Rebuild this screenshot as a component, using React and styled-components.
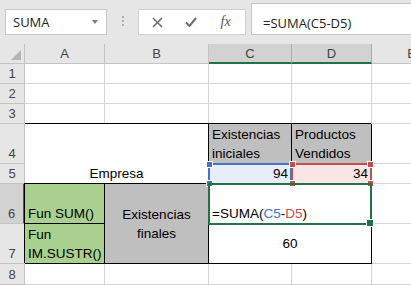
import React from "react"
import styled, { createGlobalStyle } from "styled-components"

const GlobalStyle = createGlobalStyle`
  html, body {
    margin: 0;
    padding: 0;
    background: #fff;
  }
`

const Window = styled.div`
  width: 411px;
  height: 285px;
  overflow: hidden;
  background: #e6e6e6;
  display: flex;
  flex-direction: column;
`

const FormulaBar = styled.div`
  height: 44px;
  flex: none;
  display: flex;
  align-items: flex-start;
  padding-left: 5px;
  font-family: "Open Sans", sans-serif;
  font-size: 13px;
  color: #222;
`

const NameBox = styled.div`
  margin-top: 9px;
  width: 102px;
  height: 26px;
  box-sizing: border-box;
  background: #fff;
  border: 1px solid #c6c6c6;
  display: flex;
  align-items: center;
  justify-content: space-between;
  padding: 0 8px 0 7px;
`

const Caret = styled.span`
  width: 0;
  height: 0;
  border-left: 3.5px solid transparent;
  border-right: 3.5px solid transparent;
  border-top: 4px solid #7a7a7a;
`

const Grip = styled.div`
  width: 31px;
  margin-top: 16px;
  display: flex;
  flex-direction: column;
  align-items: center;
  gap: 2px;

  span {
    width: 2px;
    height: 2px;
    background: #b0b0b0;
  }
`

const ButtonsBox = styled.div`
  margin-top: 9px;
  width: 108px;
  height: 26px;
  box-sizing: border-box;
  background: #fff;
  border: 1px solid #d0d0d0;
  display: flex;
  align-items: center;
  padding-left: 1px;
`

const IconButton = styled.div`
  width: ${p => p.$w}px;
  display: flex;
  justify-content: center;
  align-items: center;
  color: #6d6d6d;
`

const Fx = styled.span`
  font-family: "Liberation Serif", serif;
  font-style: italic;
  font-size: 14px;
  color: #555;
`

const FormulaInput = styled.div`
  margin: 3px 0 0 5px;
  flex: 1;
  height: 32px;
  box-sizing: border-box;
  background: #fff;
  border: 1px solid #c6c6c6;
  border-right: none;
  padding: 10px 0 0 11px;
  line-height: 18px;
`

const Sheet = styled.div`
  position: relative;
  display: grid;
  grid-template-columns: 25px 80px 104px 83px 80px 80px;
  grid-template-rows: 20px 20px 20px 20px 40px 20px 40px 40px 21px;
  background: #fff;
  font-family: "Liberation Sans", Arial, sans-serif;
  font-size: 13.5px;
  color: #000;
`

const Corner = styled.div`
  grid-column: 1;
  grid-row: 1;
  box-sizing: border-box;
  background: #e6e6e6;
  border-right: 1px solid #c4c4c4;
  border-bottom: 1px solid #c4c4c4;
  display: flex;
  align-items: flex-end;
  justify-content: flex-end;
  padding: 0 3px 3px 0;
`

const ColHead = styled.div`
  grid-row: 1;
  box-sizing: border-box;
  background: ${p => (p.$sel ? "#d2d2d2" : "#e6e6e6")};
  border-right: 1px solid ${p => (p.$sel ? "#ababab" : "#c4c4c4")};
  border-bottom: ${p => (p.$sel ? "2px solid #217346" : "1px solid #c4c4c4")};
  display: flex;
  align-items: center;
  justify-content: center;
  font-size: 13px;
  color: #444;
  padding-top: ${p => (p.$sel ? "1px" : "0")};
`

const RowHead = styled.div`
  grid-column: 1;
  box-sizing: border-box;
  background: ${p => (p.$sel ? "#d2d2d2" : "#e6e6e6")};
  border-right: ${p => (p.$sel ? "2px solid #217346" : "1px solid #c4c4c4")};
  border-bottom: 1px solid #c4c4c4;
  display: flex;
  align-items: flex-end;
  justify-content: center;
  font-size: 13px;
  line-height: 19px;
  color: #444;
`

const Cell = styled.div`
  grid-column: ${p => p.$col};
  grid-row: ${p => p.$row};
  box-sizing: border-box;
  min-width: 0;
  background: ${p => p.$bg || "#fff"};
  border-right: 1px solid ${p => (p.$box ? "#000" : "#d4d4d4")};
  border-bottom: 1px solid ${p => (p.$box || p.$bottom ? "#000" : "#d4d4d4")};
  box-shadow: ${p =>
    p.$box ? "-1px -1px 0 0 #000" : p.$top ? "0 -1px 0 0 #000" : "none"};
  position: ${p => (p.$box || p.$top ? "relative" : "static")};
  z-index: ${p => (p.$box || p.$top ? 1 : "auto")};
  display: flex;
  align-items: ${p => p.$valign || "flex-end"};
  justify-content: ${p => p.$align || "flex-start"};
  text-align: ${p => p.$text || "left"};
  padding: 0 3px;
  line-height: 19px;
  overflow: hidden;
`

const Ref = styled.span`
  color: ${p => p.$c};
`

/* highlight frames: absolute children placed on a grid area */
const Frame = styled.div`
  grid-column: ${p => p.$col};
  grid-row: ${p => p.$row};
  position: absolute;
  inset: -1px 0 -1px -1px;
  border: 2px solid ${p => p.$c};
  z-index: 3;
  pointer-events: none;
`

const Handle = styled.span`
  position: absolute;
  ${p => (p.$r ? "right" : "left")}: -4px;
  ${p => (p.$b ? "bottom" : "top")}: -4px;
  width: ${p => p.$s || 5}px;
  height: ${p => p.$s || 5}px;
  background: ${p => p.$c};
  border: 1px solid #fff;
`

const cols = ["A", "B", "C", "D", "E"]

function BlankRow({ row, n }) {
  return (
    <>
      <RowHead style={{ gridRow: row }}>{n}</RowHead>
      {cols.map((c, i) => (
        <Cell key={c} $col={i + 2} $row={row} />
      ))}
    </>
  )
}

export default function App() {
  const blue = "#4472c4"
  const red = "#c0504d"
  const green = "#217346"
  return (
    <Window>
      <GlobalStyle />
      <FormulaBar>
        <NameBox>
          SUMA
          <Caret />
        </NameBox>
        <Grip>
          <span />
          <span />
          <span />
        </Grip>
        <ButtonsBox>
          <IconButton $w={36}>
            <svg width="11" height="11" viewBox="0 0 11 11">
              <path d="M1 1 L10 10 M10 1 L1 10" stroke="#6d6d6d" strokeWidth="1.6" fill="none" />
            </svg>
          </IconButton>
          <IconButton $w={32}>
            <svg width="12" height="10" viewBox="0 0 12 10">
              <path d="M1 5.5 L4.5 9 L11 1" stroke="#6d6d6d" strokeWidth="2" fill="none" />
            </svg>
          </IconButton>
          <IconButton $w={40}>
            <Fx>fx</Fx>
          </IconButton>
        </ButtonsBox>
        <FormulaInput>=SUMA(C5-D5)</FormulaInput>
      </FormulaBar>

      <Sheet>
        <Corner>
          <svg width="10" height="10" viewBox="0 0 10 10">
            <path d="M10 0 L10 10 L0 10 Z" fill="#b4b4b4" />
          </svg>
        </Corner>
        {cols.map((c, i) => (
          <ColHead key={c} $sel={c === "C" || c === "D"} style={{ gridColumn: i + 2 }}>
            {c}
          </ColHead>
        ))}

        <BlankRow row={2} n={1} />
        <BlankRow row={3} n={2} />
        <BlankRow row={4} n={3} />

        <RowHead style={{ gridRow: 5 }}>4</RowHead>
        <RowHead style={{ gridRow: 6 }}>5</RowHead>
        <Cell $col="2 / 4" $row="5 / 7" $top $bottom $align="center">
          Empresa
        </Cell>
        <Cell $col={4} $row={5} $box $bg="#bfbfbf">
          Existencias iniciales
        </Cell>
        <Cell $col={5} $row={5} $box $bg="#bfbfbf">
          Productos Vendidos
        </Cell>
        <Cell $col={6} $row={5} />
        <Cell $col={4} $row={6} $box $bg="#e8eef9" $align="flex-end">
          94
        </Cell>
        <Cell $col={5} $row={6} $box $bg="#fbe5e5" $align="flex-end">
          34
        </Cell>
        <Cell $col={6} $row={6} />

        <RowHead $sel style={{ gridRow: 7 }}>6</RowHead>
        <RowHead style={{ gridRow: 8 }}>7</RowHead>
        <Cell $col={2} $row={7} $box $bg="#a9d08e">
          Fun SUM()
        </Cell>
        <Cell $col={2} $row={8} $box $bg="#a9d08e">
          Fun IM.SUSTR()
        </Cell>
        <Cell $col={3} $row="7 / 9" $box $bg="#bfbfbf" $valign="center" $align="center" $text="center">
          Existencias finales
        </Cell>
        <Cell $col="4 / 6" $row={7} $box>
          =SUMA(<Ref $c={blue}>C5</Ref>-<Ref $c={red}>D5</Ref>)
        </Cell>
        <Cell $col={6} $row={7} />
        <Cell $col="4 / 6" $row={8} $box $valign="center" $align="center">
          60
        </Cell>
        <Cell $col={6} $row={8} />

        <BlankRow row={9} n={8} />

        <Frame $col="4 / 5" $row="6 / 7" $c={blue}>
          <Handle $c={blue} />
          <Handle $c={blue} $b />
        </Frame>
        <Frame $col="5 / 6" $row="6 / 7" $c={red}>
          <Handle $c={red} />
          <Handle $c={red} $b />
          <Handle $c={red} $r />
          <Handle $c={red} $r $b />
        </Frame>
        <Frame $col="4 / 6" $row="7 / 8" $c={green}>
          <Handle $c={green} $r $b $s={6} />
        </Frame>
      </Sheet>
    </Window>
  )
}
